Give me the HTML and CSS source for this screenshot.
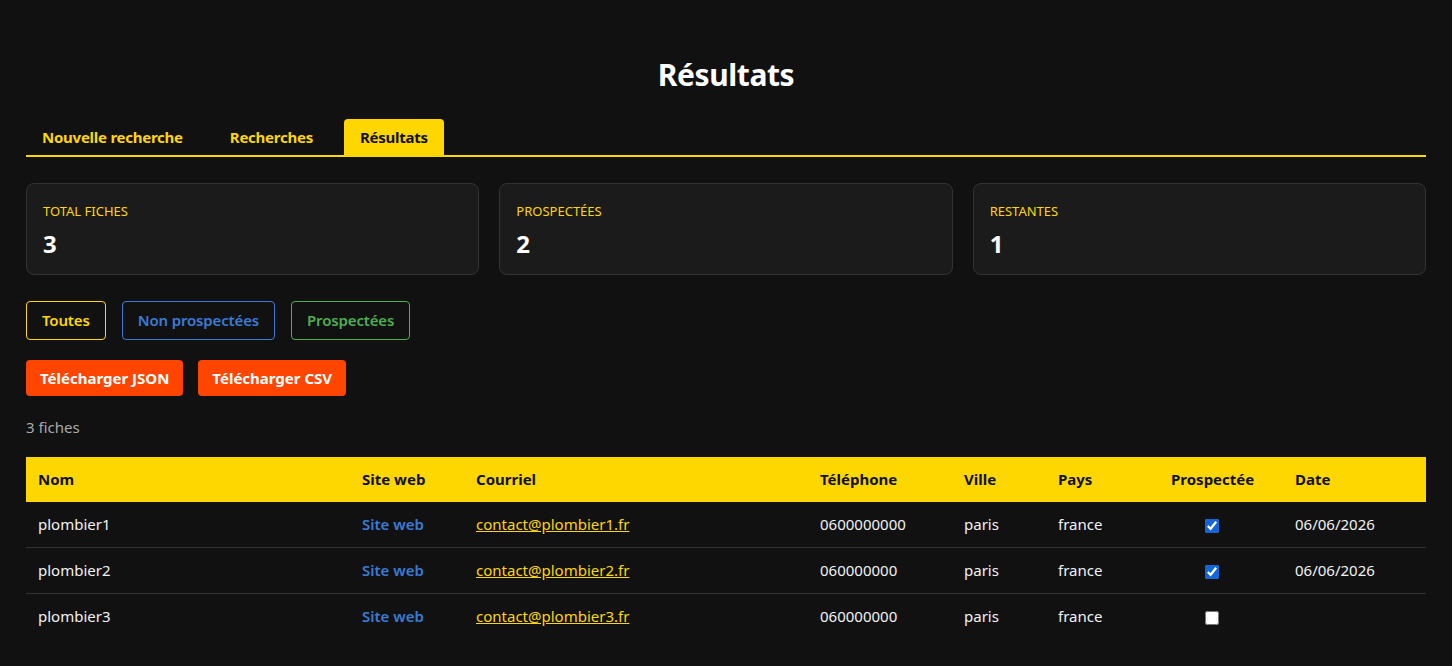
FILE: index.html
```html
<!DOCTYPE html>
<html lang="fr">
<head>
<meta charset="utf-8">
<title>Résultats</title>
<link rel="stylesheet" href="styles.css">
</head>
<body>
<div class="page">
  <h1 class="title">Résultats</h1>
  <nav class="tabs">
    <a class="tab">Nouvelle recherche</a>
    <a class="tab">Recherches</a>
    <a class="tab active">Résultats</a>
  </nav>

  <section class="stats">
    <div class="card">
      <div class="card-label">Total fiches</div>
      <div class="card-value">3</div>
    </div>
    <div class="card">
      <div class="card-label">Prospectées</div>
      <div class="card-value">2</div>
    </div>
    <div class="card">
      <div class="card-label">Restantes</div>
      <div class="card-value">1</div>
    </div>
  </section>

  <div class="filters">
    <button class="filter filter-all">Toutes</button>
    <button class="filter filter-non">Non prospectées</button>
    <button class="filter filter-pro">Prospectées</button>
  </div>

  <div class="downloads">
    <button class="dl">Télécharger JSON</button>
    <button class="dl">Télécharger CSV</button>
  </div>

  <p class="count">3 fiches</p>

  <table class="results">
    <colgroup>
      <col class="c-nom"><col class="c-site"><col class="c-mail"><col class="c-tel"><col class="c-ville"><col class="c-pays"><col class="c-pro"><col class="c-date">
    </colgroup>
    <thead>
      <tr>
        <th>Nom</th><th>Site web</th><th>Courriel</th><th>Téléphone</th><th>Ville</th><th>Pays</th><th class="center">Prospectée</th><th>Date</th>
      </tr>
    </thead>
    <tbody>
      <tr>
        <td>plombier1</td><td><a class="site">Site web</a></td><td><a class="mail">contact@plombier1.fr</a></td><td>0600000000</td><td>paris</td><td>france</td><td class="center"><input type="checkbox" checked></td><td>06/06/2026</td>
      </tr>
      <tr>
        <td>plombier2</td><td><a class="site">Site web</a></td><td><a class="mail">contact@plombier2.fr</a></td><td>060000000</td><td>paris</td><td>france</td><td class="center"><input type="checkbox" checked></td><td>06/06/2026</td>
      </tr>
      <tr>
        <td>plombier3</td><td><a class="site">Site web</a></td><td><a class="mail">contact@plombier3.fr</a></td><td>060000000</td><td>paris</td><td>france</td><td class="center"><input type="checkbox"></td><td></td>
      </tr>
    </tbody>
  </table>
</div>
</body>
</html>
```

FILE: styles.css
```css
* { box-sizing: border-box; }

html, body {
  margin: 0;
  padding: 0;
  background: #111111;
  color: #eeeeee;
  font-family: "Noto Sans", "Open Sans", sans-serif;
  font-size: 15px;
}

.page {
  max-width: 1400px;
  margin: 0 auto;
  padding-bottom: 26px;
}

.title {
  margin: 55px 0 24px;
  text-align: center;
  font-size: 30px;
  line-height: 40px;
  font-weight: 700;
  letter-spacing: -0.4px;
  color: #ffffff;
}

.tabs {
  display: flex;
  gap: 15px;
  border-bottom: 2px solid #ffd700;
}

.tab {
  display: block;
  padding: 9px 16px;
  line-height: 18px;
  font-weight: 700;
  letter-spacing: -0.25px;
  color: #ffd700;
  border-radius: 4px 4px 0 0;
  cursor: pointer;
}

.tab.active {
  background: #ffd700;
  color: #111111;
}

.stats {
  display: grid;
  grid-template-columns: repeat(3, 1fr);
  gap: 20px;
  margin-top: 26px;
}

.card {
  background: #1b1b1b;
  border: 1px solid #333333;
  border-radius: 8px;
  padding: 18px 16px 14px;
}

.card-label {
  font-size: 13px;
  line-height: 18px;
  color: #ffd700;
  text-transform: uppercase;
}

.card-value {
  margin-top: 8px;
  font-size: 24px;
  line-height: 32px;
  font-weight: 700;
  color: #ffffff;
}

.filters {
  display: flex;
  gap: 16px;
  margin-top: 26px;
}

.filter {
  font-family: inherit;
  font-size: 15px;
  font-weight: 600;
  line-height: 17px;
  padding: 10px 15px;
  letter-spacing: -0.15px;
  background: transparent;
  border: 1px solid;
  border-radius: 4px;
}

.filter-all { color: #ffd700; border-color: #ffd700; }
.filter-non { color: #3a7bd5; border-color: #3a7bd5; }
.filter-pro { color: #4caf50; border-color: #4caf50; }

.downloads {
  display: flex;
  gap: 15px;
  margin-top: 20px;
}

.dl {
  font-family: inherit;
  font-size: 15px;
  font-weight: 700;
  line-height: 18px;
  padding: 9px 14px;
  background: #ff4500;
  color: #ffffff;
  border: none;
  border-radius: 4px;
}

.count {
  margin: 21px 0 0;
  line-height: 20px;
  color: #aaaaaa;
}

.results {
  width: 100%;
  margin-top: 20px;
  border-collapse: collapse;
  table-layout: fixed;
}

.c-nom { width: 324px; }
.c-site { width: 114px; }
.c-mail { width: 344px; }
.c-tel { width: 144px; }
.c-ville { width: 94px; }
.c-pays { width: 113px; }
.c-pro { width: 124px; }
.c-date { width: 143px; }

.results th {
  background: #ffd700;
  color: #111111;
  font-weight: 700;
  text-align: left;
  padding: 12px;
  line-height: 21px;
}

.results td {
  padding: 12px;
  line-height: 21px;
  color: #f2f2f2;
  border-bottom: 1px solid #333333;
}

.results tbody tr:last-child td { border-bottom: none; }

.results .center {
  text-align: center;
  padding-right: 30px;
}

.results input[type="checkbox"] {
  width: 14px;
  height: 14px;
  margin: 0;
  vertical-align: middle;
  accent-color: #1565d8;
}

.site {
  color: #3a7bd5;
  font-weight: 600;
  text-decoration: none;
}

.mail {
  color: #ffd700;
  text-decoration: underline;
}
```
